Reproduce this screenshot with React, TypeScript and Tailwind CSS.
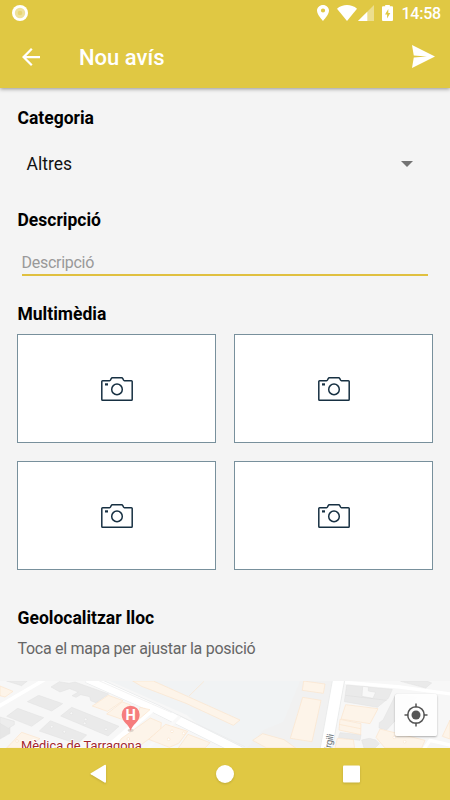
import { useState } from "react";

const StatusBar = () => (
  <div className="flex h-[27px] items-center pb-px pl-3 pr-[9px] text-white">
    <svg width="16" height="16" viewBox="0 0 16 16" className="mr-auto">
      <circle cx="8" cy="8" r="8" fill="#fff" />
      <circle cx="8" cy="8" r="5.2" fill="#efe19a" />
      <circle cx="8" cy="8" r="2.3" fill="#e8d574" />
    </svg>
    <svg width="12" height="16" viewBox="5 2 14 20" preserveAspectRatio="none" fill="currentColor">
      <path d="M12 2C8.13 2 5 5.13 5 9c0 5.25 7 13 7 13s7-7.75 7-13c0-3.87-3.13-7-7-7zm0 9.5a2.5 2.5 0 1 1 0-5 2.5 2.5 0 0 1 0 5z" />
    </svg>
    <svg width="20" height="16" viewBox="0 0 20 16" className="ml-2" fill="currentColor">
      <path d="M0 3.8C5.5-1.2 14.5-1.2 20 3.8L10 16z" />
    </svg>
    <svg width="16" height="16" viewBox="0 0 16 16" className="ml-[1px]" fill="currentColor">
      <path d="M0 16L16 0v16z" opacity=".4" />
      <path d="M0 16L9.3 6.7V16z" />
    </svg>
    <svg width="11" height="16" viewBox="0 0 11 16" className="ml-[8px]">
      <path
        fill="currentColor"
        d="M1 1.2h2.2V0h4.6v1.2H10a1 1 0 0 1 1 1V15a1 1 0 0 1-1 1H1a1 1 0 0 1-1-1V2.2a1 1 0 0 1 1-1z"
      />
      <path fill="#e0c843" d="M6.3 4L3 9.5h2.1V13.6L8.3 8H6.3z" />
    </svg>
    <span className="ml-2 pt-[2px] text-[16px] font-medium leading-none tracking-[-0.2px]">14:58</span>
  </div>
);

const Toolbar = () => (
  <div className="flex h-[61px] items-center pl-[22px] pr-[15px] text-white">
    <svg width="18" height="18" viewBox="4 4 16 16" className="-mt-[2px]" fill="currentColor">
      <path d="M20 11H7.83l5.59-5.59L12 4l-8 8 8 8 1.41-1.41L7.83 13H20v-2z" />
    </svg>
    <h1 className="ml-[39px] text-[22px] font-medium leading-none">Nou avís</h1>
    <button type="button" className="-mt-[2px] ml-auto">
      <svg width="23" height="23" viewBox="2 3 21 18" preserveAspectRatio="none" fill="currentColor">
        <path d="M2.01 21L23 12 2.01 3 3.6 11.2l12 .8-12 .8z" />
      </svg>
    </button>
  </div>
);

const CameraIcon = () => (
  <svg width="32" height="24" viewBox="0 0 32 24" fill="none" stroke="#173042" strokeWidth="1.5">
    <path
      strokeLinejoin="round"
      d="M1.6 3.7H8.6Q9.2 3.7 9.5 3L10.2 1.6Q10.6 .8 11.4 .8H20.6Q21.4 .8 21.8 1.6L22.5 3Q22.8 3.7 23.4 3.7H30.4Q31.2 3.7 31.2 4.5V22.4Q31.2 23.2 30.4 23.2H1.6Q.8 23.2 .8 22.4V4.5Q.8 3.7 1.6 3.7z"
    />
    <circle cx="16" cy="12.4" r="5.3" />
    <path d="M4 7.4h3" strokeWidth="2.2" />
  </svg>
);

const MapPreview = () => (
  <svg
    width="450"
    height="67"
    viewBox="0 33 1350 201"
    preserveAspectRatio="none"
    className="block"
    fontFamily="Roboto, sans-serif"
  >
    <rect y="33" width="1350" height="201" fill="#f7f7f7" />
    <path d="M330 33H1000L960 234H680L560 135z" fill="#f1f3f4" />
    <path d="M900 33H1000L960 234H740L790 180L850 155z" fill="#f1f1f1" />

    {/* streets */}
    <g stroke="#fff" fill="none">
      <path d="M-5 110L135 28" strokeWidth="11" />
      <path d="M262 25L466 116L720 243" stroke="#e9ebec" strokeWidth="29" />
      <path d="M262 25L466 116L720 243" strokeWidth="25" />
      <path d="M290 29L515 128" stroke="#ececec" strokeWidth="2" />
      <path d="M530 133L735 230" stroke="#ececec" strokeWidth="2" />
      <path d="M460 115L310 244" strokeWidth="17" />
      <path d="M540 139L440 238" stroke="#f9f9f9" strokeWidth="10" />
      <path d="M1016 28L978 240" stroke="#ebecec" strokeWidth="39" />
      <path d="M1016 28L978 240" strokeWidth="33" />
      <path d="M1035 37L1200 51L1360 73" strokeWidth="10" />
      <path d="M1270 240L1290 211L1355 226" strokeWidth="10" />
    </g>

    {/* grey buildings */}
    <g fill="#eaeaea" stroke="#e0e0e0" strokeWidth="1.5">
      <path d="M20 33H82L65 47z" />
      <path d="M153 51L178 35L207 40L225 36L326 72L288 98L272 92L269 80L242 74L228 82L216 77L235 66L209 56L180 66z" />
      <path d="M116 76L188 101L155 123L82 95z" />
      <path d="M53 115L131 143L95 169L20 139z" />
      <path d="M215 112L357 169L324 198L182 138z" />
      <path d="M151 152L260 195L232 222L118 183z" />
      <path d="M0 150L30 161V190L0 207z" fill="#e6e6e6" />
      <path d="M0 160L25 175L43 164V154L0 141z" fill="#ededed" />
      <path d="M1040 45L1177 58L1165 85L1132 112L1033 95z" />
      <path d="M1202 34H1282L1295 39L1277 54z" />
      <path d="M1188 72L1250 82L1160 180L1137 174L1138 158L1149 150z" />
      <path d="M1085 210L1108 205L1127 210L1138 221L1125 234H1092z" />
      <path d="M1020 188L1083 194L1080 211L1015 203z" />
    </g>
    <path
      d="M1088 49L1086 79L1119 85L1127 67L1105 63V51z"
      fill="#f8f8f8"
      stroke="#dedede"
      strokeWidth="1.5"
    />
    <path d="M1036 76L1160 91" stroke="#dddddd" strokeWidth="1.5" />
    <g fill="#f7f7f7" stroke="#dcdcdc" strokeWidth="1.5">
      <circle cx="214" cy="130" r="4" />
      <circle cx="257" cy="148" r="4" />
      <circle cx="254" cy="160" r="4" />
      <circle cx="318" cy="178" r="4" />
      <circle cx="155" cy="170" r="4" />
      <circle cx="193" cy="185" r="4" />
    </g>

    {/* commercial blocks */}
    <g fill="#fdf4e9" stroke="#fbe2c8" strokeWidth="1.8">
      <path d="M0 48L39 64L15 81L0 77z" />
      <path d="M398 33H460L720 150L700 166L558 100L425 49z" />
      <path d="M567 78L612 34" fill="none" />
      <path d="M325 76L369 92L322 124L277 108z" />
      <path d="M367 96L390 104L372 150L320 132z" />
      <path d="M420 112L450 119L405 158z" />
      <path d="M451 144L484 158L482 181L413 232H345L365 205z" />
      <path d="M497 163L563 184L536 220L508 232L446 208z" />
      <path d="M564 193L630 218L615 234H535z" />
      <path d="M65 187L120 206L75 234H20z" />
      <path d="M788 191L852 209L887 234H800L758 211z" />
      <path d="M911 33L975 42L970 70L907 61z" />
      <path d="M908 82L963 91L936 215L871 205z" />
      <path d="M1037 104L1134 116L1110 161L1023 147z" />
      <path d="M1020 148L1083 161L1082 194L1017 180z" />
      <path d="M1017 163L1082 176" />
      <path d="M1012 205L1060 209L1064 234H1005z" />
      <path d="M1140 177L1275 211L1265 234H1155L1128 202z" />
      <path d="M1350 150L1327 199L1350 207z" />
    </g>
    <g fill="#fff" stroke="#f8ddc1" strokeWidth="1.5">
      <circle cx="506" cy="208" r="4" />
      <circle cx="516" cy="184" r="4" />
      <circle cx="551" cy="190" r="4" />
      <circle cx="51" cy="213" r="4" />
      <circle cx="385" cy="207" r="4" />
      <circle cx="1183" cy="202" r="4" />
      <circle cx="1214" cy="215" r="4" />
    </g>

    {/* hospital pin */}
    <ellipse cx="392" cy="181" rx="9" ry="5" fill="#ddd2ca" />
    <path d="M392 183C388 162 365 157 365 134a27 27 0 0 1 54 0C419 157 396 162 392 183z" fill="#f67d7d" />
    <text x="392" y="150" textAnchor="middle" fontSize="44" fontWeight="700" fill="#fff">
      H
    </text>
    <text
      x="63"
      y="239"
      fontSize="39"
      fill="#a3262d"
      stroke="#fff"
      strokeWidth="4"
      paintOrder="stroke"
      textLength="362"
      lengthAdjust="spacingAndGlyphs"
    >
      Mèdica de Tarragona
    </text>
    <text transform="translate(990 258) rotate(-80)" fontSize="29" fill="#6b7277" textLength="66">
      Virgili
    </text>
  </svg>
);

const App = () => {
  const [description, setDescription] = useState("");

  return (
    <div className="flex h-[800px] w-[450px] flex-col overflow-hidden bg-[#f4f4f4] font-['Roboto',sans-serif] text-black">
      <header className="relative h-[88px] shrink-0 bg-[#e0c843] shadow-[0_1px_4px_rgba(0,0,0,0.4)]">
        <StatusBar />
        <Toolbar />
      </header>

      <main className="flex h-[593px] shrink-0 flex-col px-[17.5px]">
        <h2 className="mt-[18px] text-[17.5px] font-bold leading-6">Categoria</h2>
        <div className="mt-[22px] flex h-6 items-center justify-between pl-[9px] pr-[20px]">
          <span className="text-[17.5px] text-[#111]">Altres</span>
          <svg width="12" height="6" viewBox="0 0 12 6">
            <path d="M0 0h12L6 6z" fill="#737373" />
          </svg>
        </div>

        <h2 className="mt-[32px] text-[17.5px] font-bold leading-6">Descripció</h2>
        <input
          type="text"
          value={description}
          onChange={(e) => setDescription(e.target.value)}
          placeholder="Descripció"
          className="ml-1 mr-[4.5px] mt-[18px] h-[26px] border-b-2 border-[#e0c040] text-[16px] leading-6 tracking-[-0.28px] outline-none placeholder:text-[#999]"
        />

        <h2 className="mt-[26px] text-[17.5px] font-bold leading-6">Multimèdia</h2>
        <div className="mt-2 -ml-[.5px] grid grid-cols-[199px_199px] gap-x-[18px] gap-y-[18px]">
          {[0, 1, 2, 3].map((slot) => (
            <button
              key={slot}
              type="button"
              className="flex h-[109px] items-center justify-center border border-[#78909c] bg-white"
            >
              <CameraIcon />
            </button>
          ))}
        </div>

        <h2 className="mt-[36px] text-[17.5px] font-bold leading-6">Geolocalitzar lloc</h2>
        <p className="mt-[7px] text-[16px] leading-6 tracking-[-0.28px] text-[#666]">
          Toca el mapa per ajustar la posició
        </p>
      </main>

      <div className="relative h-[67px] shrink-0">
        <MapPreview />
        <button
          type="button"
          className="absolute right-[13px] top-[13px] flex h-[42px] w-[42px] items-center justify-center rounded-[2px] bg-white/90 shadow-[0_1px_2px_rgba(0,0,0,0.3)]"
        >
          <svg width="24" height="24" viewBox="0 0 24 24" fill="none" stroke="#555" strokeWidth="1.5">
            <circle cx="12" cy="12" r="8.3" />
            <circle cx="12" cy="12" r="4.5" fill="#555" stroke="none" />
            <path d="M12 .5v4M12 19.5v4M.5 12h4M19.5 12h4" />
          </svg>
        </button>
      </div>

      <nav className="flex h-[52px] shrink-0 items-center bg-[#e0c843] pl-[90px]">
        <svg width="271" height="20" viewBox="0 0 271 20" fill="#fff" className="drop-shadow-[0_1px_1px_rgba(0,0,0,0.15)]">
          <path d="M.8 9.3L14.5 1.1Q16 .3 16 2v15.6q0 1.7-1.5.9L.8 10.3q-.8-.5 0-1z" />
          <circle cx="135" cy="10" r="9" />
          <rect x="253" y="1.5" width="17" height="17" rx="1" />
        </svg>
      </nav>
    </div>
  );
};

export default App;
